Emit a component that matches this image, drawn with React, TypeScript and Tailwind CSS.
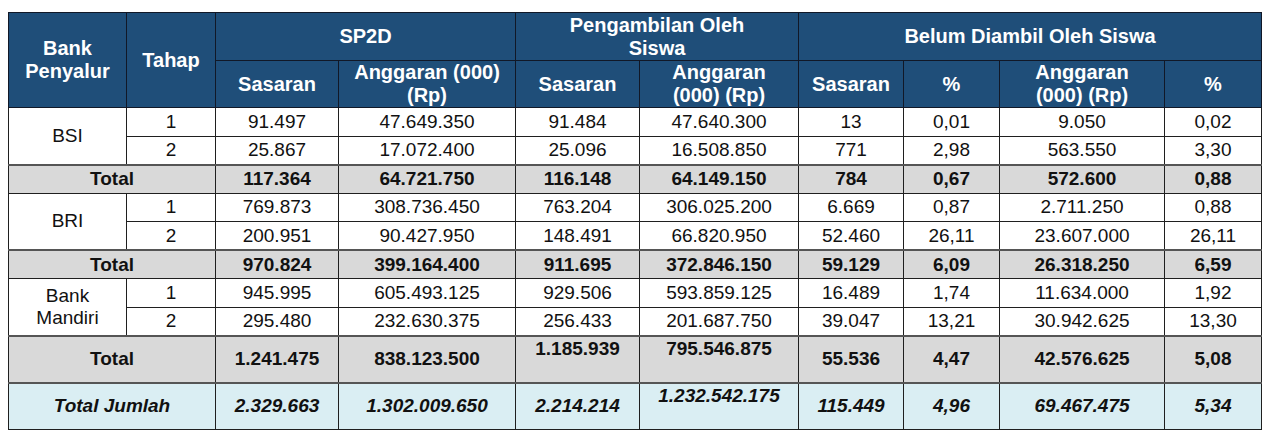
import React from "react";

const B = "border border-[#1f1f1f]";
const H = "border border-[#111827] bg-[#1f4e79] text-white font-bold text-center align-middle px-1 text-[20px] leading-[23px]";

const groups: { bank: React.ReactNode; rows: string[][]; total: string[]; tall?: boolean }[] = [
  {
    bank: "BSI",
    rows: [
      ["1", "91.497", "47.649.350", "91.484", "47.640.300", "13", "0,01", "9.050", "0,02"],
      ["2", "25.867", "17.072.400", "25.096", "16.508.850", "771", "2,98", "563.550", "3,30"],
    ],
    total: ["117.364", "64.721.750", "116.148", "64.149.150", "784", "0,67", "572.600", "0,88"],
  },
  {
    bank: "BRI",
    rows: [
      ["1", "769.873", "308.736.450", "763.204", "306.025.200", "6.669", "0,87", "2.711.250", "0,88"],
      ["2", "200.951", "90.427.950", "148.491", "66.820.950", "52.460", "26,11", "23.607.000", "26,11"],
    ],
    total: ["970.824", "399.164.400", "911.695", "372.846.150", "59.129", "6,09", "26.318.250", "6,59"],
  },
  {
    bank: (
      <>
        Bank
        <br />
        Mandiri
      </>
    ),
    rows: [
      ["1", "945.995", "605.493.125", "929.506", "593.859.125", "16.489", "1,74", "11.634.000", "1,92"],
      ["2", "295.480", "232.630.375", "256.433", "201.687.750", "39.047", "13,21", "30.942.625", "13,30"],
    ],
    total: ["1.241.475", "838.123.500", "1.185.939", "795.546.875", "55.536", "4,47", "42.576.625", "5,08"],
    tall: true,
  },
];

const jumlah = ["2.329.663", "1.302.009.650", "2.214.214", "1.232.542.175", "115.449", "4,96", "69.467.475", "5,34"];

export default function App() {
  return (
    <div
      className="w-[1270px] h-[437px] bg-white pt-[12px] pl-[8px]"
      style={{ fontFamily: '"Liberation Sans", Arial, sans-serif' }}
    >
      <table className="table-fixed border-collapse w-[1253px] text-[19px] leading-[22px] text-[#111]">
        <colgroup>
          <col className="w-[118px]" />
          <col className="w-[89px]" />
          <col className="w-[123px]" />
          <col className="w-[177px]" />
          <col className="w-[124px]" />
          <col className="w-[159px]" />
          <col className="w-[105px]" />
          <col className="w-[96px]" />
          <col className="w-[165px]" />
          <col className="w-[97px]" />
        </colgroup>
        <thead>
          <tr className="h-[48px]">
            <th rowSpan={2} className={H}>
              Bank
              <br />
              Penyalur
            </th>
            <th rowSpan={2} className={H}>
              Tahap
            </th>
            <th colSpan={2} className={H}>
              SP2D
            </th>
            <th colSpan={2} className={H}>
              Pengambilan Oleh
              <br />
              Siswa
            </th>
            <th colSpan={4} className={H}>
              Belum Diambil Oleh Siswa
            </th>
          </tr>
          <tr className="h-[47px]">
            <th className={H}>Sasaran</th>
            <th className={H}>
              Anggaran (000)
              <br />
              (Rp)
            </th>
            <th className={H}>Sasaran</th>
            <th className={H}>
              Anggaran
              <br />
              (000) (Rp)
            </th>
            <th className={H}>Sasaran</th>
            <th className={H}>%</th>
            <th className={H}>
              Anggaran
              <br />
              (000) (Rp)
            </th>
            <th className={H}>%</th>
          </tr>
        </thead>
        <tbody>
          {groups.map((g, gi) => (
            <React.Fragment key={gi}>
              {g.rows.map((r, ri) => (
                <tr key={ri} className="h-[28.5px]">
                  {ri === 0 && (
                    <td rowSpan={2} className={`${B} text-center align-middle`}>
                      {g.bank}
                    </td>
                  )}
                  {r.map((v, vi) => (
                    <td key={vi} className={`${B} text-center align-middle p-0`}>
                      {v}
                    </td>
                  ))}
                </tr>
              ))}
              <tr className={g.tall ? "h-[47px] bg-[#d9d9d9]" : "h-[28.5px] bg-[#d9d9d9]"}>
                <td colSpan={2} className={`${B} border-t-2 border-t-[#555] text-center font-bold align-middle`}>
                  Total
                </td>
                {g.total.map((v, vi) => (
                  <td
                    key={vi}
                    className={`${B} border-t-2 border-t-[#555] text-center font-bold p-0 ${
                      g.tall && (vi === 2 || vi === 3) ? "align-top pt-[1px]" : "align-middle"
                    }`}
                  >
                    {v}
                  </td>
                ))}
              </tr>
            </React.Fragment>
          ))}
          <tr className="h-[47px] bg-[#daeef3]">
            <td colSpan={2} className={`${B} border-t-2 border-t-[#555] text-center font-bold italic align-middle`}>
              Total Jumlah
            </td>
            {jumlah.map((v, vi) => (
              <td
                key={vi}
                className={`${B} border-t-2 border-t-[#555] text-center font-bold italic p-0 ${
                  vi === 3 ? "align-top pt-[1px]" : "align-middle"
                }`}
              >
                {v}
              </td>
            ))}
          </tr>
        </tbody>
      </table>
    </div>
  );
}
